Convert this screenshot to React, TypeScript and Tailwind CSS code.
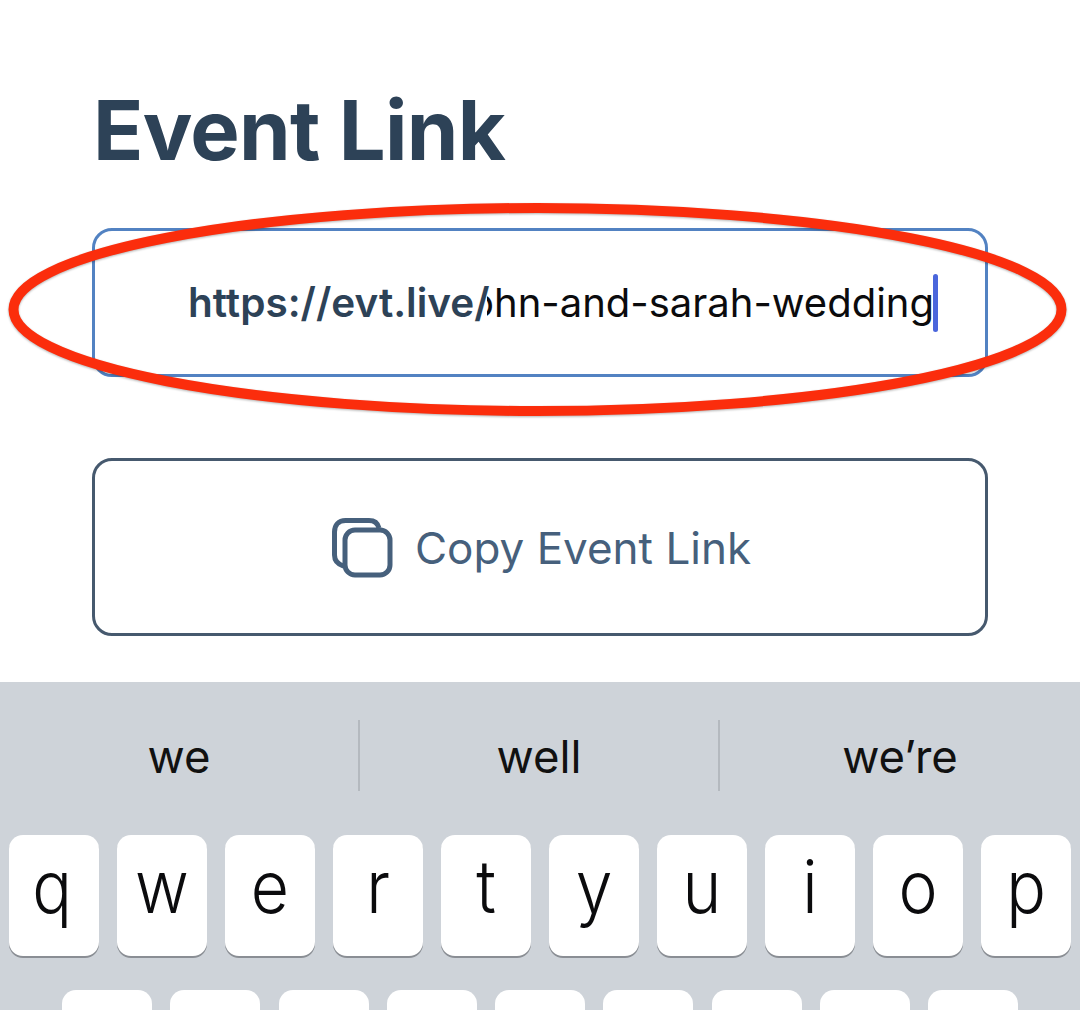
export default function App() {
  const row1 = ["q", "w", "e", "r", "t", "y", "u", "i", "o", "p"];
  const row2 = ["a", "s", "d", "f", "g", "h", "j", "k", "l"];
  const font = { fontFamily: 'Inter, "Noto Sans", sans-serif' };
  return (
    <div className="relative w-[1080px] h-[1010px] overflow-hidden bg-white flex flex-col" style={font}>
      <div className="h-[682px] shrink-0 px-[92px] pt-[85px]">
        <h1 className="pl-[1px] text-[83px] leading-[90px] font-bold tracking-[-0.7px] text-[#2d4257]">Event Link</h1>
        <div className="mt-[53px] h-[149px] rounded-[20px] border-[3px] border-[#5282c2] flex items-center pl-[93px]">
          <span className="w-[299px] shrink-0 text-[40.5px] leading-[48px] font-semibold text-[#2d4257] whitespace-nowrap">https://evt.live/</span>
          <span className="w-[447px] shrink-0 overflow-hidden flex justify-end text-[40px] leading-[48px] text-[#0b0b0d] whitespace-nowrap">
            <span className="shrink-0">john-and-sarah-wedding</span>
          </span>
          <span className="w-[5px] h-[58px] -ml-[1px] shrink-0 rounded-full bg-[#4a66dc]" />
        </div>
        <div className="mt-[81px] h-[178px] pt-[2px] pl-[2px] rounded-[20px] border-[3px] border-[#46596e] flex items-center justify-center gap-[22px]">
          <svg width="62" height="62" viewBox="0 0 62 62" fill="none" stroke="#46607c" strokeWidth="5">
            <path d="M12.5 49 C6 47 3.5 43 3.5 38 V15 C3.5 8 7.5 3.5 14.5 3.5 H38 C44 3.5 47 7 48 11" />
            <rect x="14" y="13" width="45" height="45" rx="10" />
          </svg>
          <span className="text-[44px] leading-[52px] text-[#46607c]">Copy Event Link</span>
        </div>
      </div>
      <div className="flex-1 bg-[#ced3d9] flex flex-col">
        <div className="mt-[38px] h-[71px] flex items-center text-[45.5px] text-[#111]">
          <div className="w-[358px] h-full pt-[3px] flex items-center justify-center">we</div>
          <div className="w-[360px] h-full pt-[3px] flex items-center justify-center border-l-2 border-[#b4b9bf]">well</div>
          <div className="flex-1 h-full pt-[3px] flex items-center justify-center border-l-2 border-[#b4b9bf]">we’re</div>
        </div>
        <div className="mt-[44px] flex gap-[18px] pl-[9px]">
          {row1.map((k) => (
            <div
              key={k}
              className="w-[90px] h-[121px] shrink-0 rounded-[14px] bg-white shadow-[0_2px_0_#8a8e94] flex items-center justify-center pb-[17px] text-[66px] font-light leading-none text-[#0b0b0d]"
            >
              <span className={`inline-block scale-y-110 ${k === "q" ? "-ml-[4px]" : ""}`}>{k}</span>
            </div>
          ))}
        </div>
        <div className="mt-[34px] flex gap-[18.25px] pl-[62px]">
          {row2.map((k) => (
            <div key={k} className="w-[90px] h-[122px] shrink-0 rounded-[14px] bg-white" />
          ))}
        </div>
      </div>
      <svg className="absolute left-0 top-0 pointer-events-none drop-shadow-[0_1px_1px_rgba(0,0,0,0.3)]" width="1080" height="1010" fill="none">
        <ellipse cx="537.5" cy="309.5" rx="524" ry="101.5" stroke="#fb2d0c" strokeWidth="10" />
      </svg>
    </div>
  );
}
